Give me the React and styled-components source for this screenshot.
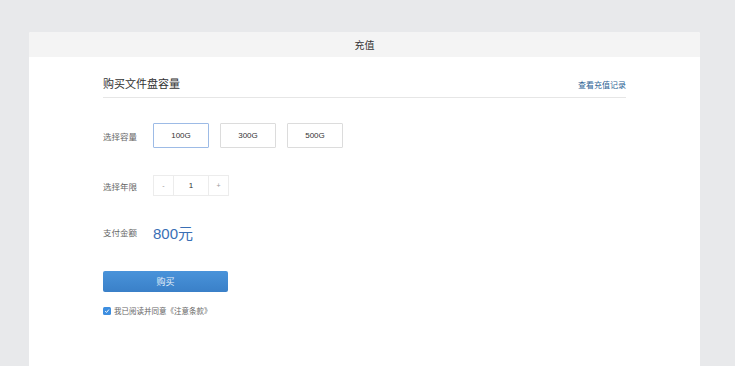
import React, { useState } from "react";
import styled, { createGlobalStyle } from "styled-components";

const GlobalStyle = createGlobalStyle`
  html, body {
    margin: 0;
    padding: 0;
    background: #e8e9eb;
    font-family: "Liberation Sans", "Noto Sans CJK SC", sans-serif;
  }
`;

const Page = styled.div`
  width: 735px;
  height: 366px;
  padding: 32px 35px 0 29px;
  box-sizing: border-box;
  overflow: hidden;
`;

const Card = styled.div`
  background: #fff;
  height: 334px;
  border-radius: 2px 2px 0 0;
  overflow: hidden;
`;

const CardHeader = styled.div`
  height: 25px;
  background: #f4f4f4;
  display: flex;
  align-items: center;
  justify-content: center;
  font-size: 10px;
  color: #333;
`;

const Body = styled.div`
  padding: 0 74px;
`;

const TitleBar = styled.div`
  display: flex;
  align-items: flex-end;
  justify-content: space-between;
  height: 41px;
  padding-bottom: 6px;
  box-sizing: border-box;
  border-bottom: 1px solid #e6e6e6;
`;

const Title = styled.div`
  font-size: 11px;
  color: #333;
`;

const Link = styled.a`
  font-size: 8px;
  color: #2c5f94;
  text-decoration: none;
  cursor: pointer;
  margin-bottom: 1px;
`;

const Row = styled.div`
  display: flex;
  align-items: center;
  height: ${(p) => p.h}px;
  margin-top: ${(p) => p.mt}px;
`;

const Label = styled.div`
  width: 50px;
  font-size: 8.5px;
  color: #666;
`;

const Options = styled.div`
  display: flex;
  gap: 11px;
`;

const Option = styled.button`
  width: 56px;
  height: 25px;
  box-sizing: border-box;
  background: #fff;
  border: 1px solid ${(p) => (p.active ? "#9dbbe6" : "#dcdcdc")};
  border-radius: 1px;
  font-family: inherit;
  font-size: 8px;
  color: #333;
  padding: 0;
  cursor: pointer;
`;

const Stepper = styled.div`
  display: flex;
  height: 21px;
  box-sizing: border-box;
  border: 1px solid #ececec;
`;

const StepBtn = styled.button`
  width: 19px;
  border: none;
  background: #fff;
  color: #999;
  font-size: 7px;
  padding: 0;
  font-family: inherit;
`;

const StepValue = styled.div`
  width: 34px;
  border-left: 1px solid #ececec;
  border-right: 1px solid #ececec;
  display: flex;
  align-items: center;
  justify-content: center;
  font-size: 8px;
  color: #333;
`;

const Amount = styled.div`
  font-size: 15px;
  color: #3a6fb5;
`;

const BuyButton = styled.button`
  display: block;
  width: 125px;
  height: 21px;
  margin-top: 29px;
  border: none;
  border-radius: 2px;
  background: linear-gradient(#4993da, #3a80c8);
  color: #e6f0fa;
  font-family: inherit;
  font-size: 9px;
  padding: 0;
`;

const Agree = styled.label`
  display: flex;
  align-items: center;
  gap: 3px;
  margin-top: 13px;
  font-size: 7.5px;
  color: #666;
`;

const Check = styled.span`
  width: 8px;
  height: 8px;
  border-radius: 1.5px;
  background: #3d8ee0;
  display: flex;
  align-items: center;
  justify-content: center;
`;

export default function App() {
  const [size, setSize] = useState("100G");
  const [years, setYears] = useState(1);

  return (
    <Page>
      <GlobalStyle />
      <Card>
        <CardHeader>充值</CardHeader>
        <Body>
          <TitleBar>
            <Title>购买文件盘容量</Title>
            <Link>查看充值记录</Link>
          </TitleBar>
          <Row h={25} mt={25}>
            <Label>选择容量</Label>
            <Options>
              {["100G", "300G", "500G"].map((s) => (
                <Option key={s} active={s === size} onClick={() => setSize(s)}>
                  {s}
                </Option>
              ))}
            </Options>
          </Row>
          <Row h={21} mt={27}>
            <Label>选择年限</Label>
            <Stepper>
              <StepBtn onClick={() => setYears(Math.max(1, years - 1))}>-</StepBtn>
              <StepValue>{years}</StepValue>
              <StepBtn onClick={() => setYears(years + 1)}>+</StepBtn>
            </Stepper>
          </Row>
          <Row h={20} mt={26}>
            <Label>支付金额</Label>
            <Amount>800元</Amount>
          </Row>
          <BuyButton>购买</BuyButton>
          <Agree>
            <Check>
              <svg width="6" height="6" viewBox="0 0 10 10">
                <path d="M2 5.2 L4.2 7.4 L8.2 2.6" fill="none" stroke="#fff" strokeWidth="1.6" />
              </svg>
            </Check>
            我已阅读并同意《注意条款》
          </Agree>
        </Body>
      </Card>
    </Page>
  );
}
